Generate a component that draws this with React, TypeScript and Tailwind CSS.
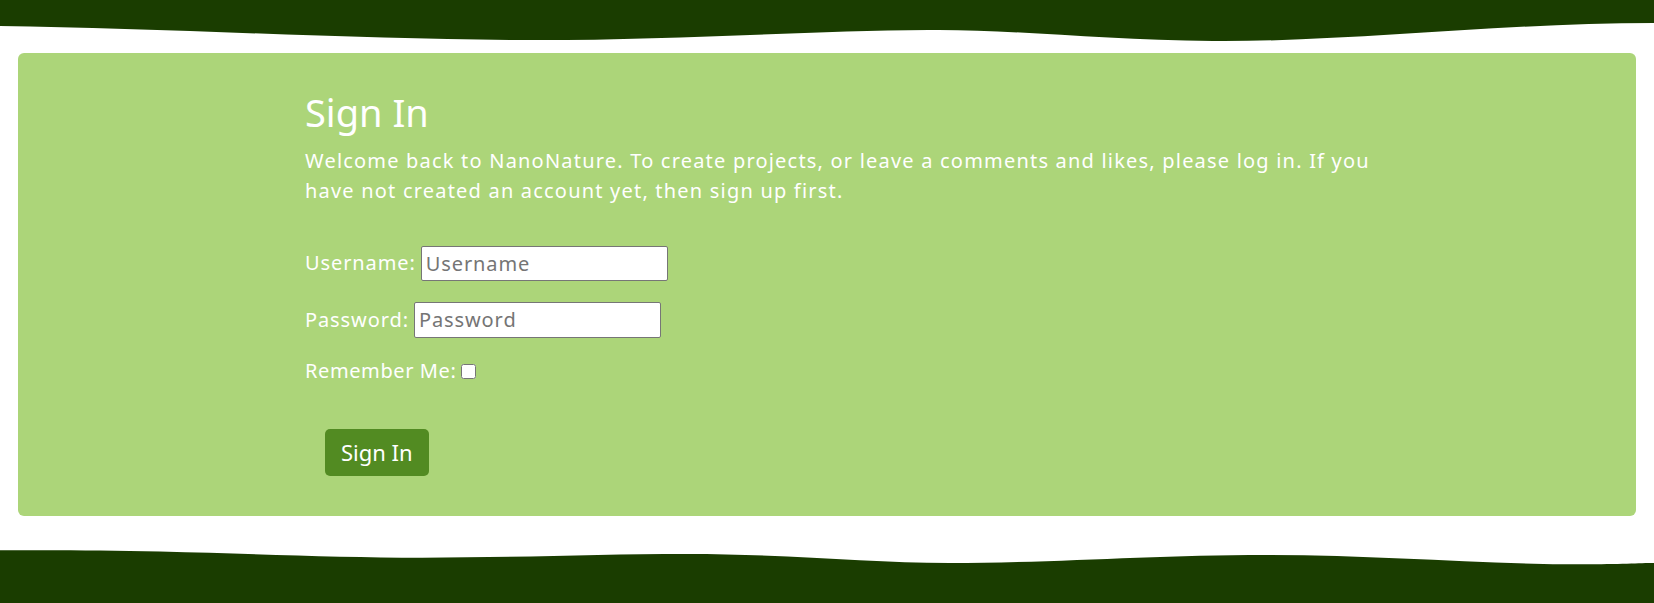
import React from "react";

const font = { fontFamily: '"Noto Sans", "Open Sans", sans-serif' };

function TopWave() {
  return (
    <svg
      className="block h-[42px] w-full"
      viewBox="0 0 1654 42"
      preserveAspectRatio="none"
      aria-hidden
    >
      <path
        d="M0 0 H1654 V23 C1500 23 1350 42 1213 41 C1100 40 1010 29 928 30 C800 31 660 41 517 40 C350 39 160 28 0 26 Z"
        fill="#1a3d00"
      />
    </svg>
  );
}

function BottomWave() {
  return (
    <svg
      className="block h-[58px] w-full"
      viewBox="0 0 1654 58"
      preserveAspectRatio="none"
      aria-hidden
    >
      <path
        d="M0 4.3 C60 4 105 4.3 160 5.5 C260 8 340 11.7 422 11.7 C520 11.7 600 8 686 8 C790 8 870 17 949 17 C1060 17 1150 9 1266 9 C1380 9 1480 18.3 1582 18.3 C1620 18.3 1640 17 1654 17 V58 H0 Z"
        fill="#1a3d00"
      />
    </svg>
  );
}

const fieldInput =
  "ml-[5px] w-[247px] rounded-[2px] border border-[#767676] bg-white px-[4px] text-[20px] tracking-[0.9px] text-[#333] placeholder:text-[#757575] focus:outline-none";

export default function App() {
  return (
    <div className="min-h-[603px] bg-white text-white" style={font}>
      <TopWave />

      <main className="mx-[18px] mt-[11px] rounded-md bg-[#acd579] pb-[40px] pl-[287px] pt-[37px]">
        <h1 className="text-[38px] font-normal leading-[1.2]">Sign In</h1>
        <p className="mt-[10px] text-[20px] leading-[30px] tracking-[1.2px]">
          Welcome back to NanoNature. To create projects, or leave a comments and likes, please log in. If you
          <br />
          have not created an account yet, then sign up first.
        </p>

        <form className="mt-[40px] flex flex-col text-[20px] leading-[30px] tracking-[0.9px]">
          <div className="flex items-center">
            <label htmlFor="id_login">Username:</label>
            <input
              id="id_login"
              type="text"
              placeholder="Username"
              className={`${fieldInput} h-[35px]`}
              style={font}
            />
          </div>

          <div className="mt-[21px] flex items-center">
            <label htmlFor="id_password">Password:</label>
            <input
              id="id_password"
              type="password"
              placeholder="Password"
              className={`${fieldInput} h-[36px]`}
              style={font}
            />
          </div>

          <div className="mt-[18px] flex items-center">
            <label htmlFor="id_remember" className="tracking-[0.6px]">Remember Me:</label>
            <input
              id="id_remember"
              type="checkbox"
              className="ml-[5px] mt-[1px] h-[15px] w-[15px]"
            />
          </div>

          <div className="mt-[43px]">
            <button
              type="button"
              className="ml-[20px] h-[47px] rounded-[5px] bg-[#528b22] px-[16px] text-[22px] leading-none tracking-normal text-white"
              style={font}
            >
              Sign In
            </button>
          </div>
        </form>
      </main>

      <div className="mt-[30px]">
        <BottomWave />
      </div>
    </div>
  );
}
